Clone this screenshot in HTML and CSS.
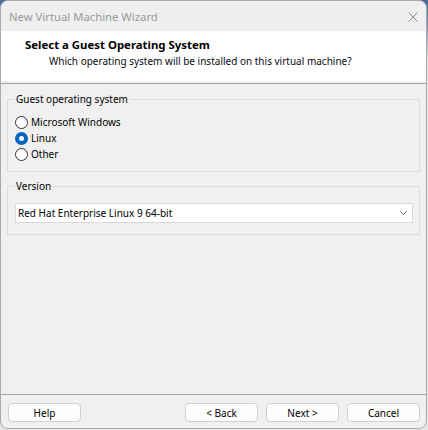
FILE: index.html
```html
<!DOCTYPE html>
<html>
<head>
<meta charset="utf-8">
<link rel="stylesheet" href="styles.css">
</head>
<body>
<div class="window">
  <div class="titlebar">
    <span class="title">New Virtual Machine Wizard</span>
    <svg class="close" width="10" height="10" viewBox="0 0 10 10"><path d="M0.5 0.5L9.5 9.5M9.5 0.5L0.5 9.5" stroke="#8c8c8c" stroke-width="1" fill="none"/></svg>
  </div>
  <div class="header">
    <div class="h-title">Select a Guest Operating System</div>
    <div class="h-sub">Which operating system will be installed on this virtual machine?</div>
  </div>
  <div class="sep"></div>
  <div class="content">
    <fieldset class="group g1">
      <legend>Guest operating system</legend>
      <label class="radio"><span class="dot"></span>Microsoft Windows</label>
      <label class="radio"><span class="dot on"></span>Linux</label>
      <label class="radio"><span class="dot"></span>Other</label>
    </fieldset>
    <fieldset class="group g2">
      <legend>Version</legend>
      <div class="combo">
        <span>Red Hat Enterprise Linux 9 64-bit</span>
        <svg width="7" height="4" viewBox="0 0 7 4"><path d="M0.3 0.3L3.5 3.5L6.7 0.3" stroke="#6a6a6a" stroke-width="1" fill="none"/></svg>
      </div>
    </fieldset>
  </div>
  <div class="sep2"></div>
  <div class="buttons">
    <button class="btn">Help</button>
    <div class="spacer"></div>
    <button class="btn">&lt; Back</button>
    <button class="btn">Next &gt;</button>
    <button class="btn">Cancel</button>
  </div>
</div>
</body>
</html>
```
FILE: styles.css
```css
html, body {
  margin: 0;
  padding: 0;
}
body {
  width: 428px;
  height: 430px;
  background: linear-gradient(#4a6a9c 0, #7d8fb4 25px, #e6e6e6 60px, #e6e6e6 100%);
  font-family: "Noto Sans", "Open Sans", sans-serif;
  font-size: 10px;
  color: #000;
  overflow: hidden;
}
.window {
  width: 425px;
  height: 427px;
  background: #f0f0f0;
  border: 1px solid #a9a9a9;
  border-radius: 8px;
  overflow: hidden;
  display: flex;
  flex-direction: column;
}
.titlebar {
  height: 30px;
  flex: none;
  display: flex;
  align-items: center;
  justify-content: space-between;
  padding: 0 8px 0 8px;
  background: #efefef;
}
.title {
  color: #9a9a9a;
  font-size: 11.3px;
  margin-top: 0;
}
.close {
  display: block;
  margin-top: 1px;
}
.header {
  height: 50px;
  flex: none;
  background: #fff;
  box-sizing: border-box;
  padding: 6px 0 0 24px;
}
.h-title {
  font-weight: bold;
  font-size: 11.4px;
  line-height: 16px;
}
.h-sub {
  padding-left: 24px;
  line-height: 16px;
  color: #0a0a14;
}
.sep {
  height: 1px;
  margin-top: 2px;
  background: #a0a0a0;
  flex: none;
}
.content {
  flex: 1;
  padding: 8px 6px 0 6px;
}
.group {
  margin: 0;
  border: 1px solid #dcdcdc;
  min-inline-size: 0;
}
.group legend {
  padding: 0 2px;
  margin-left: -1px;
  line-height: 14px;
}
.g1 {
  padding: 8px 6px 9px 7px;
}
.radio {
  display: flex;
  align-items: center;
  height: 16px;
  line-height: 16px;
}
.dot {
  width: 11px;
  height: 11px;
  border: 1px solid #333;
  border-radius: 50%;
  margin-right: 3px;
  background: #fff;
  flex: none;
}
.dot.on {
  border: 4px solid #0067c0;
  width: 5px;
  height: 5px;
}
.g2 {
  margin-top: 7px;
  padding: 10px 6px 11px 7px;
}
.combo {
  height: 20px;
  box-sizing: border-box;
  border: 1px solid #d9d9d9;
  background: #fff;
  display: flex;
  align-items: center;
  justify-content: space-between;
  padding: 0 5px 0 2px;
}
.combo svg {
  display: block;
  margin-top: -1px;
}
.sep2 {
  height: 1px;
  background: #a0a0a0;
  flex: none;
}
.buttons {
  height: 33px;
  box-sizing: border-box;
  flex: none;
  display: flex;
  align-items: flex-start;
  padding: 8px 6px 0 7px;
  gap: 8px;
}
.spacer {
  flex: 1;
}
.btn {
  width: 73px;
  height: 19px;
  border: 1px solid #d0d0d0;
  border-radius: 4px;
  background: #fdfdfd;
  font-family: inherit;
  font-size: 10px;
  padding: 0;
  color: #000;
  line-height: 16px;
}
```
